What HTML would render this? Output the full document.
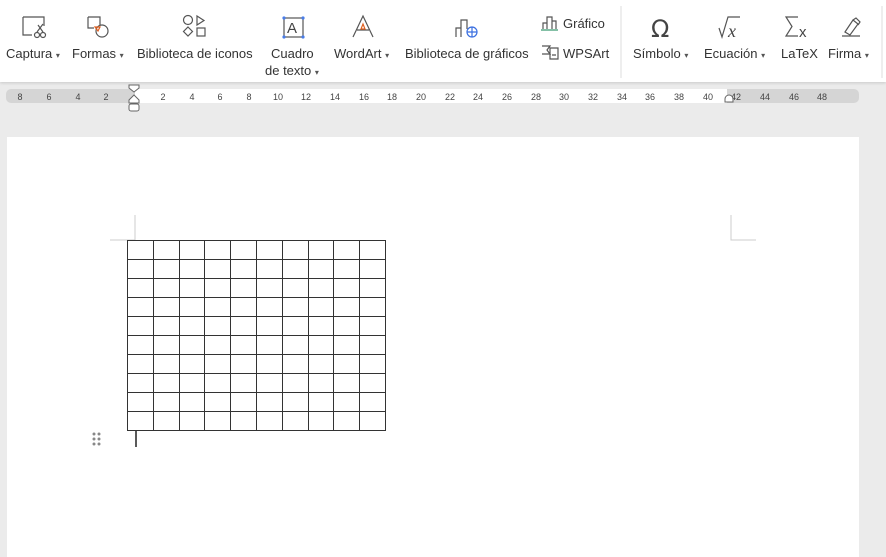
<!DOCTYPE html>
<html><head><style>
body{margin:0;width:886px;height:546px;overflow:hidden;background:#ebebeb;font-family:"Liberation Sans",sans-serif;position:relative}
.tb{position:absolute;left:0;top:0;width:886px;height:82px;background:#fff;box-shadow:0 1px 3px rgba(0,0,0,.15)}
.l{position:absolute;font-size:13px;color:#333;white-space:nowrap}
.c{font-size:8px;color:#555}
svg{position:absolute}
.ruler{position:absolute;left:6px;top:89px;width:853px;height:14px;background:#d5d5d5;border-radius:5px}
.rw{position:absolute;left:135px;top:89px;width:592px;height:14px;background:#fff}
.n{position:absolute;top:92px;font-size:9px;color:#444;transform:translateX(-50%)}
.page{position:absolute;left:7px;top:137px;width:852px;height:420px;background:#fff}
table{position:absolute;left:127px;top:240px;border-collapse:collapse}
td{border:1px solid #333;width:24.8px;height:18px;padding:0}
</style></head><body>
<div class="tb">
<svg width="886" height="82" fill="none" stroke="#555" stroke-width="1.2">
<path d="M23 17h21v9M23 17v18h9"/><circle cx="37" cy="35" r="2.5"/><circle cx="43" cy="35" r="2.5"/><path d="M37 32l6-8M43 32l-5-7"/>
<path d="M88 17h12v8M88 17v11h6"/><circle cx="102" cy="31" r="6"/><path d="M95 27l5 0-2 4z" stroke="#e06020"/>
<circle cx="188" cy="20" r="4.5"/><path d="M197 16l7 4.5-7 4.5z"/><path d="M188 27l4.5 4.5-4.5 4.5-4.5-4.5z"/><rect x="197" y="28" width="8" height="8"/>
<rect x="284" y="18" width="19" height="19"/><text x="287" y="33" font-size="15" fill="#444" stroke="none" font-family="Liberation Sans">A</text>
<g fill="#4a7de8" stroke="none"><circle cx="284" cy="18" r="1.6"/><circle cx="303" cy="18" r="1.6"/><circle cx="284" cy="37" r="1.6"/><circle cx="303" cy="37" r="1.6"/></g>
<path d="M353 37l10-21 10 21M357 30h12"/><path d="M361 29l2-5 2 5z" stroke="#e06020"/>
<path d="M456 37v-9h5v9M461 37v-17h6v9"/><circle cx="472" cy="32" r="5" stroke="#3a6fe0"/><path d="M467 32h10M472 27v10" stroke="#3a6fe0"/>
<path d="M543 29v-6h4v6M547 29v-12h5v12M552 21h4v8"/><path d="M541 30h17" stroke="#3a9a70"/>
<path d="M542 46h8l-3 4 3 4h-8M550 48h8v11h-8zM552 55h4"/>
<text x="651" y="37" font-size="24" fill="#444" stroke="none" font-family="DejaVu Sans" font-weight="normal">Ω</text>
<path d="M719 28l3 9 6-20h12"/><text x="728" y="37" font-size="18" font-style="italic" fill="#444" stroke="none" font-family="Liberation Serif">x</text>
<path d="M798 17h-12l6 9.5-6 9.5h12"/><text x="799" y="37" font-size="15" fill="#444" stroke="none">x</text>
<path d="M842 36h18M845 32l8-12 5 4-8 11zM853 20l3-2 4 4-2 3"/>
<path d="M621 6v72M882 6v72" stroke="#e3e3e3"/>
</svg>
<div class="l" style="left:6px;top:46px">Captura <span class="c">▾</span></div>
<div class="l" style="left:72px;top:46px">Formas <span class="c">▾</span></div>
<div class="l" style="left:137px;top:46px">Biblioteca de iconos</div>
<div class="l" style="left:271px;top:46px">Cuadro</div>
<div class="l" style="left:265px;top:63px">de texto <span class="c">▾</span></div>
<div class="l" style="left:334px;top:46px">WordArt <span class="c">▾</span></div>
<div class="l" style="left:405px;top:46px">Biblioteca de gráficos</div>
<div class="l" style="left:563px;top:16px">Gráfico</div>
<div class="l" style="left:563px;top:46px">WPSArt</div>
<div class="l" style="left:633px;top:46px">Símbolo <span class="c">▾</span></div>
<div class="l" style="left:704px;top:46px">Ecuación <span class="c">▾</span></div>
<div class="l" style="left:781px;top:46px">LaTeX</div>
<div class="l" style="left:828px;top:46px">Firma <span class="c">▾</span></div>
</div>
<div class="ruler"></div><div class="rw"></div>
<div class="n" style="left:20px">8</div><div class="n" style="left:49px">6</div><div class="n" style="left:78px">4</div><div class="n" style="left:106px">2</div>
<div class="n" style="left:163px">2</div><div class="n" style="left:192px">4</div><div class="n" style="left:220px">6</div><div class="n" style="left:249px">8</div>
<div class="n" style="left:278px">10</div><div class="n" style="left:306px">12</div><div class="n" style="left:335px">14</div><div class="n" style="left:364px">16</div><div class="n" style="left:392px">18</div><div class="n" style="left:421px">20</div><div class="n" style="left:450px">22</div><div class="n" style="left:478px">24</div><div class="n" style="left:507px">26</div><div class="n" style="left:536px">28</div><div class="n" style="left:564px">30</div><div class="n" style="left:593px">32</div><div class="n" style="left:622px">34</div><div class="n" style="left:650px">36</div><div class="n" style="left:679px">38</div><div class="n" style="left:708px">40</div><div class="n" style="left:736px">42</div><div class="n" style="left:765px">44</div><div class="n" style="left:794px">46</div><div class="n" style="left:822px">48</div>
<svg style="left:0;top:82px" width="886" height="35" fill="#fff" stroke="#666" stroke-width="1"><path d="M129 3h10v3l-5 4-5-4z"/><path d="M134 13l5 5v3h-10v-3z"/><rect x="129" y="22" width="10" height="7" rx="2"/><path d="M725 17a4 4 0 1 1 8 0v3h-8z"/></svg>
<div class="page"></div>
<svg style="left:0;top:0" width="886" height="546" fill="none" stroke="#ccc"><path d="M135 215v25M110 240h25M731 215v25h25"/><g fill="#888" stroke="none"><circle cx="94" cy="434" r="1.5"/><circle cx="99" cy="434" r="1.5"/><circle cx="94" cy="439" r="1.5"/><circle cx="99" cy="439" r="1.5"/><circle cx="94" cy="444" r="1.5"/><circle cx="99" cy="444" r="1.5"/></g><path d="M136 431v16" stroke="#222" stroke-width="1.5"/></svg>
<table>
<tr><td></td><td></td><td></td><td></td><td></td><td></td><td></td><td></td><td></td><td></td></tr>
<tr><td></td><td></td><td></td><td></td><td></td><td></td><td></td><td></td><td></td><td></td></tr>
<tr><td></td><td></td><td></td><td></td><td></td><td></td><td></td><td></td><td></td><td></td></tr>
<tr><td></td><td></td><td></td><td></td><td></td><td></td><td></td><td></td><td></td><td></td></tr>
<tr><td></td><td></td><td></td><td></td><td></td><td></td><td></td><td></td><td></td><td></td></tr>
<tr><td></td><td></td><td></td><td></td><td></td><td></td><td></td><td></td><td></td><td></td></tr>
<tr><td></td><td></td><td></td><td></td><td></td><td></td><td></td><td></td><td></td><td></td></tr>
<tr><td></td><td></td><td></td><td></td><td></td><td></td><td></td><td></td><td></td><td></td></tr>
<tr><td></td><td></td><td></td><td></td><td></td><td></td><td></td><td></td><td></td><td></td></tr>
<tr><td></td><td></td><td></td><td></td><td></td><td></td><td></td><td></td><td></td><td></td></tr>
</table>
</body></html>
